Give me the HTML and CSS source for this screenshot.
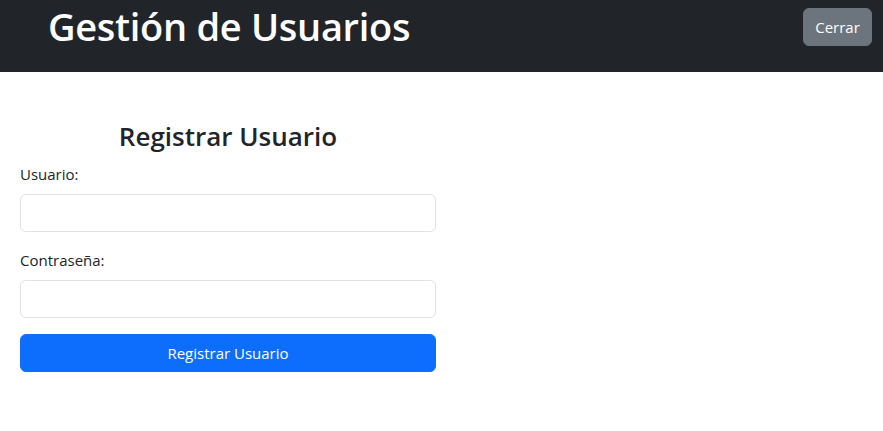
FILE: index.html
```html
<!DOCTYPE html>
<html lang="es">
<head>
<meta charset="utf-8">
<title>Gestión de Usuarios</title>
<link rel="stylesheet" href="styles.css">
</head>
<body>
<header class="topbar">
  <h1 class="topbar-title">Gestión de Usuarios</h1>
  <button class="btn btn-secondary" type="button">Cerrar</button>
</header>
<main class="content">
  <form class="register-form">
    <h2 class="form-title">Registrar Usuario</h2>
    <div class="field">
      <label class="form-label" for="usuario">Usuario:</label>
      <input class="form-control" id="usuario" type="text">
    </div>
    <div class="field">
      <label class="form-label" for="clave">Contraseña:</label>
      <input class="form-control" id="clave" type="password">
    </div>
    <button class="btn btn-primary btn-block" type="button">Registrar Usuario</button>
  </form>
</main>
</body>
</html>
```
FILE: styles.css
```css
* { box-sizing: border-box; }
html, body { margin: 0; padding: 0; }
body {
  font-family: "Open Sans", "Noto Sans", "Liberation Sans", sans-serif;
  font-size: 16px;
  line-height: 24px;
  color: #212529;
  background: #fff;
}
.topbar {
  height: 72px;
  background: #212529;
  display: flex;
  justify-content: space-between;
  align-items: flex-start;
  padding: 0 11px 0 48px;
}
.topbar-title {
  margin: 0;
  color: #fff;
  font-size: 38px;
  line-height: 52px;
  font-weight: 600;
  letter-spacing: -0.3px;
}
.btn {
  font-family: inherit;
  font-size: 16px;
  line-height: 24px;
  border: 1px solid transparent;
  border-radius: 6px;
  padding: 6px 12px;
  cursor: pointer;
}
.btn-secondary {
  margin-top: 8px;
  background: #6c757d;
  border-color: #6c757d;
  color: #fff;
  width: 69px;
  height: 38px;
  padding: 6px 0;
  font-size: 15px;
}
.content {
  padding: 47px 20px 0;
}
.register-form {
  width: 416px;
}
.form-title {
  margin: 0 0 8px;
  text-align: center;
  font-size: 26px;
  line-height: 35px;
  font-weight: 600;
}
.field { margin-bottom: 16px; }
.form-label {
  display: block;
  margin-bottom: 8px;
  font-size: 15px;
}
.form-control {
  display: block;
  width: 100%;
  height: 38px;
  border: 1px solid #dee2e6;
  border-radius: 6px;
  padding: 6px 12px;
  font-family: inherit;
  font-size: 16px;
  background: #fff;
}
.btn-primary {
  display: block;
  width: 100%;
  height: 38px;
  background: #0d6efd;
  border-color: #0d6efd;
  color: #fff;
  font-size: 15px;
}
```
